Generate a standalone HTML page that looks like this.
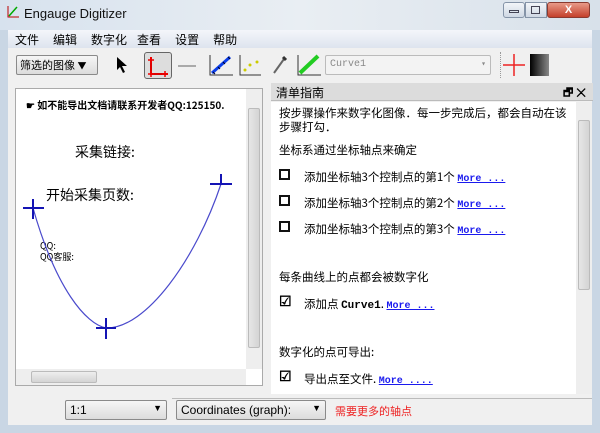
<!DOCTYPE html>
<html><head><meta charset="utf-8"><style>
*{margin:0;padding:0;box-sizing:border-box}
body{width:600px;height:433px;overflow:hidden;background:#c9d6e4;font-family:"Liberation Sans","Noto Sans CJK SC",sans-serif;font-size:12px;color:#000;position:relative}
.a{position:absolute;white-space:nowrap}
.cn{font-family:"Noto Sans CJK SC",sans-serif}
.mono{font-family:"Liberation Mono",monospace}
.more{font-family:"Liberation Mono",monospace;font-size:10px;color:#1a1aee;text-decoration:underline;font-weight:bold}
.cb{width:11px;height:11px;border:2px solid #111;background:#fff}
.combo{background:linear-gradient(#f6f6f6,#dcdcdc);border:1px solid #8a8a8a;border-radius:2px}
</style></head><body>
<div class="a" style="left:0;top:0;width:600px;height:30px;background:linear-gradient(90deg,#d7e2ee,#e9eef3 50%,#d8e1ea)"></div>
<svg class="a" style="left:6px;top:5px" width="14" height="14"><path d="M2 1V12H13" stroke="#b00" fill="none"/><path d="M3 11L11 2" stroke="#0a0" stroke-width="1.5"/></svg>
<div class="a" style="left:24px;top:6px;font-size:13px;color:#111">Engauge Digitizer</div>
<div class="a" style="left:503px;top:2px;width:22px;height:16px;border:1px solid #8594a8;border-radius:3px;background:linear-gradient(#f2f5f9,#cfd8e4)"></div>
<div class="a" style="left:525px;top:2px;width:22px;height:16px;border:1px solid #8594a8;background:linear-gradient(#f2f5f9,#cfd8e4)"></div>
<div class="a" style="left:547px;top:2px;width:43px;height:16px;border:1px solid #8a3a30;border-radius:3px;background:linear-gradient(#e89a88,#c4402b);color:#fff;text-align:center;font-weight:bold;font-size:11px;line-height:14px">X</div>
<div class="a" style="left:509px;top:10px;width:10px;height:3px;border:1px solid #445"></div>
<div class="a" style="left:531px;top:6px;width:9px;height:8px;border:1px solid #445"></div>
<div class="a" style="left:8px;top:30px;width:584px;height:18px;background:linear-gradient(#f4f6fa,#dde4ee)"></div>
<div class="a cn" style="left:15px;top:31px;font-size:12px"><span style="margin-right:14px">文件</span><span style="margin-right:14px">编辑</span><span style="margin-right:10px">数字化</span><span style="margin-right:14px">查看</span><span style="margin-right:14px">设置</span><span>帮助</span></div>
<div class="a" style="left:8px;top:48px;width:584px;height:32px;background:#f0f0f0"></div>
<div class="a combo cn" style="left:16px;top:55px;width:82px;height:20px;font-size:11px;padding:2px 3px;line-height:14px;overflow:hidden">筛选的图像 <span style="font-size:9px">▼</span></div>
<svg class="a" style="left:115px;top:56px" width="14" height="18"><path d="M2 1V14L5 11L8 17L10 16L7 10H12Z" fill="#000"/></svg>
<div class="a" style="left:144px;top:52px;width:28px;height:27px;border:1px solid #666;border-radius:3px;background:#ddd"></div>
<svg class="a" style="left:146px;top:54px" width="24" height="24"><path d="M5 3V20H22" stroke="#d00" stroke-width="2" fill="none"/><path d="M2 6H8M5 3V9M2 20H8M19 17V23M16 20H22M5 17V23" stroke="#e00" stroke-width="1.5"/></svg>
<div class="a" style="left:178px;top:65px;width:18px;height:2px;background:#aaa"></div>
<svg class="a" style="left:208px;top:53px" width="26" height="24"><path d="M2 2V22H25" stroke="#333" fill="none"/><path d="M4 20L22 4" stroke="#0b3eea" stroke-width="3"/><path d="M5 19l2 2M10 14l2 2M15 9l2 2M20 4l2 2" stroke="#002" stroke-width="1"/></svg>
<svg class="a" style="left:238px;top:53px" width="24" height="24"><path d="M2 2V22H23" stroke="#333" fill="none"/><circle cx="7" cy="17" r="1.5" fill="#cc0"/><circle cx="12" cy="12" r="1.5" fill="#cc0"/><circle cx="19" cy="9" r="1.5" fill="#cc0"/></svg>
<svg class="a" style="left:272px;top:55px" width="16" height="20"><path d="M2 18L12 4" stroke="#666" stroke-width="2"/><path d="M11 2l3 3" stroke="#333" stroke-width="3"/></svg>
<svg class="a" style="left:296px;top:53px" width="26" height="24"><path d="M2 2V22H25" stroke="#333" fill="none"/><path d="M4 20L22 3" stroke="#22cc22" stroke-width="4"/></svg>
<div class="a combo mono" style="left:325px;top:55px;width:166px;height:20px;background:#f3f3f3;border-color:#bbb;color:#888;font-size:10px;padding:3px 4px">Curve1<span style="float:right;font-size:8px">▾</span></div>
<div class="a" style="left:500px;top:52px;width:1px;height:26px;border-left:1px dotted #999"></div>
<svg class="a" style="left:503px;top:54px" width="22" height="22"><path d="M0 11H22M11 0V22" stroke="#e22" stroke-width="1.5"/></svg>
<div class="a" style="left:530px;top:54px;width:19px;height:22px;background:linear-gradient(90deg,#000,#888)"></div>
<div class="a" style="left:8px;top:80px;width:584px;height:315px;background:#f0f0f0"></div>
<div class="a" style="left:15px;top:88px;width:248px;height:298px;border:1px solid #aaa;background:#fff"></div>
<div class="a" style="left:246px;top:89px;width:16px;height:280px;background:#eee"></div>
<div class="a" style="left:248px;top:108px;width:12px;height:240px;background:linear-gradient(90deg,#e6e6e6,#d4d4d4);border:1px solid #bbb;border-radius:2px"></div>
<div class="a" style="left:16px;top:369px;width:230px;height:16px;background:#eee"></div>
<div class="a" style="left:31px;top:371px;width:66px;height:12px;background:linear-gradient(#eee,#d4d4d4);border:1px solid #bbb;border-radius:2px"></div>
<div class="a cn" style="left:26px;top:97px;font-size:10px;font-weight:bold;width:218px;overflow:hidden">☛ 如不能导出文档请联系开发者QQ:125150.</div>
<div class="a cn" style="left:75px;top:142px;font-size:14px">采集链接:</div>
<div class="a cn" style="left:46px;top:185px;font-size:14px">开始采集页数:</div>
<div class="a cn" style="left:40px;top:240px;font-size:9px;line-height:11px">QQ:<br>QQ客服:</div>
<svg class="a" style="left:16px;top:89px" width="230" height="280"><path d="M17 119C40 200 70 235 90 239C130 240 180 170 205 95" stroke="#4a4acc" fill="none" stroke-width="1.2"/><path d="M7 119H28M17 110V130M80 239H100M90 229V250M194 95H216M205 85V95" stroke="#1414b4" stroke-width="2"/></svg>
<div class="a" style="left:271px;top:83px;width:322px;height:18px;background:#dcdcdc;border-bottom:1px solid #bbb"></div>
<div class="a cn" style="left:276px;top:84px;font-size:12px">清单指南</div>
<div class="a" style="left:563px;top:84px;font-size:11px;font-weight:bold">🗗 ✕</div>
<div class="a" style="left:271px;top:102px;width:305px;height:292px;background:#fff"></div>
<div class="a" style="left:576px;top:102px;width:16px;height:292px;background:#eee"></div>
<div class="a" style="left:578px;top:120px;width:12px;height:170px;background:linear-gradient(90deg,#e6e6e6,#d4d4d4);border:1px solid #bbb;border-radius:2px"></div>
<div class="a cn" style="left:279px;top:106px;width:296px;font-size:11.5px;line-height:14px;white-space:normal">按步骤操作来数字化图像．每一步完成后，都会自动在该步骤打勾．</div>
<div class="a cn" style="left:279px;top:142px;font-size:11.5px">坐标系通过坐标轴点来确定</div>
<div class="a cb" style="left:279px;top:169px"></div>
<div class="a cn" style="left:304px;top:169px;font-size:11.5px">添加坐标轴3个控制点的第1个 <span class="more">More ...</span></div>
<div class="a cb" style="left:279px;top:195px"></div>
<div class="a cn" style="left:304px;top:195px;font-size:11.5px">添加坐标轴3个控制点的第2个 <span class="more">More ...</span></div>
<div class="a cb" style="left:279px;top:221px"></div>
<div class="a cn" style="left:304px;top:221px;font-size:11.5px">添加坐标轴3个控制点的第3个 <span class="more">More ...</span></div>
<div class="a cn" style="left:279px;top:269px;font-size:11.5px">每条曲线上的点都会被数字化</div>
<div class="a" style="left:279px;top:293px;font-size:14px;font-weight:bold">☑</div>
<div class="a cn" style="left:304px;top:296px;font-size:11.5px">添加点 <b class="mono" style="font-size:11px">Curve1</b>. <span class="more">More ...</span></div>
<div class="a cn" style="left:279px;top:344px;font-size:11.5px">数字化的点可导出:</div>
<div class="a" style="left:279px;top:368px;font-size:14px;font-weight:bold">☑</div>
<div class="a cn" style="left:304px;top:371px;font-size:11.5px">导出点至文件. <span class="more">More ....</span></div>
<div class="a" style="left:8px;top:395px;width:584px;height:30px;background:#f0f0f0"></div>
<div class="a combo" style="left:65px;top:400px;width:102px;height:20px;padding:2px 4px;font-size:12px">1:1<span style="float:right;font-size:9px">▼</span></div>
<div class="a" style="left:172px;top:398px;width:420px;height:1px;background:#bbb"></div>
<div class="a combo" style="left:176px;top:400px;width:150px;height:20px;padding:2px 4px;font-size:12px">Coordinates (graph):<span style="float:right;font-size:9px">▼</span></div>
<div class="a cn" style="left:335px;top:403px;font-size:11px;color:#e22">需要更多的轴点</div>
</body></html>
